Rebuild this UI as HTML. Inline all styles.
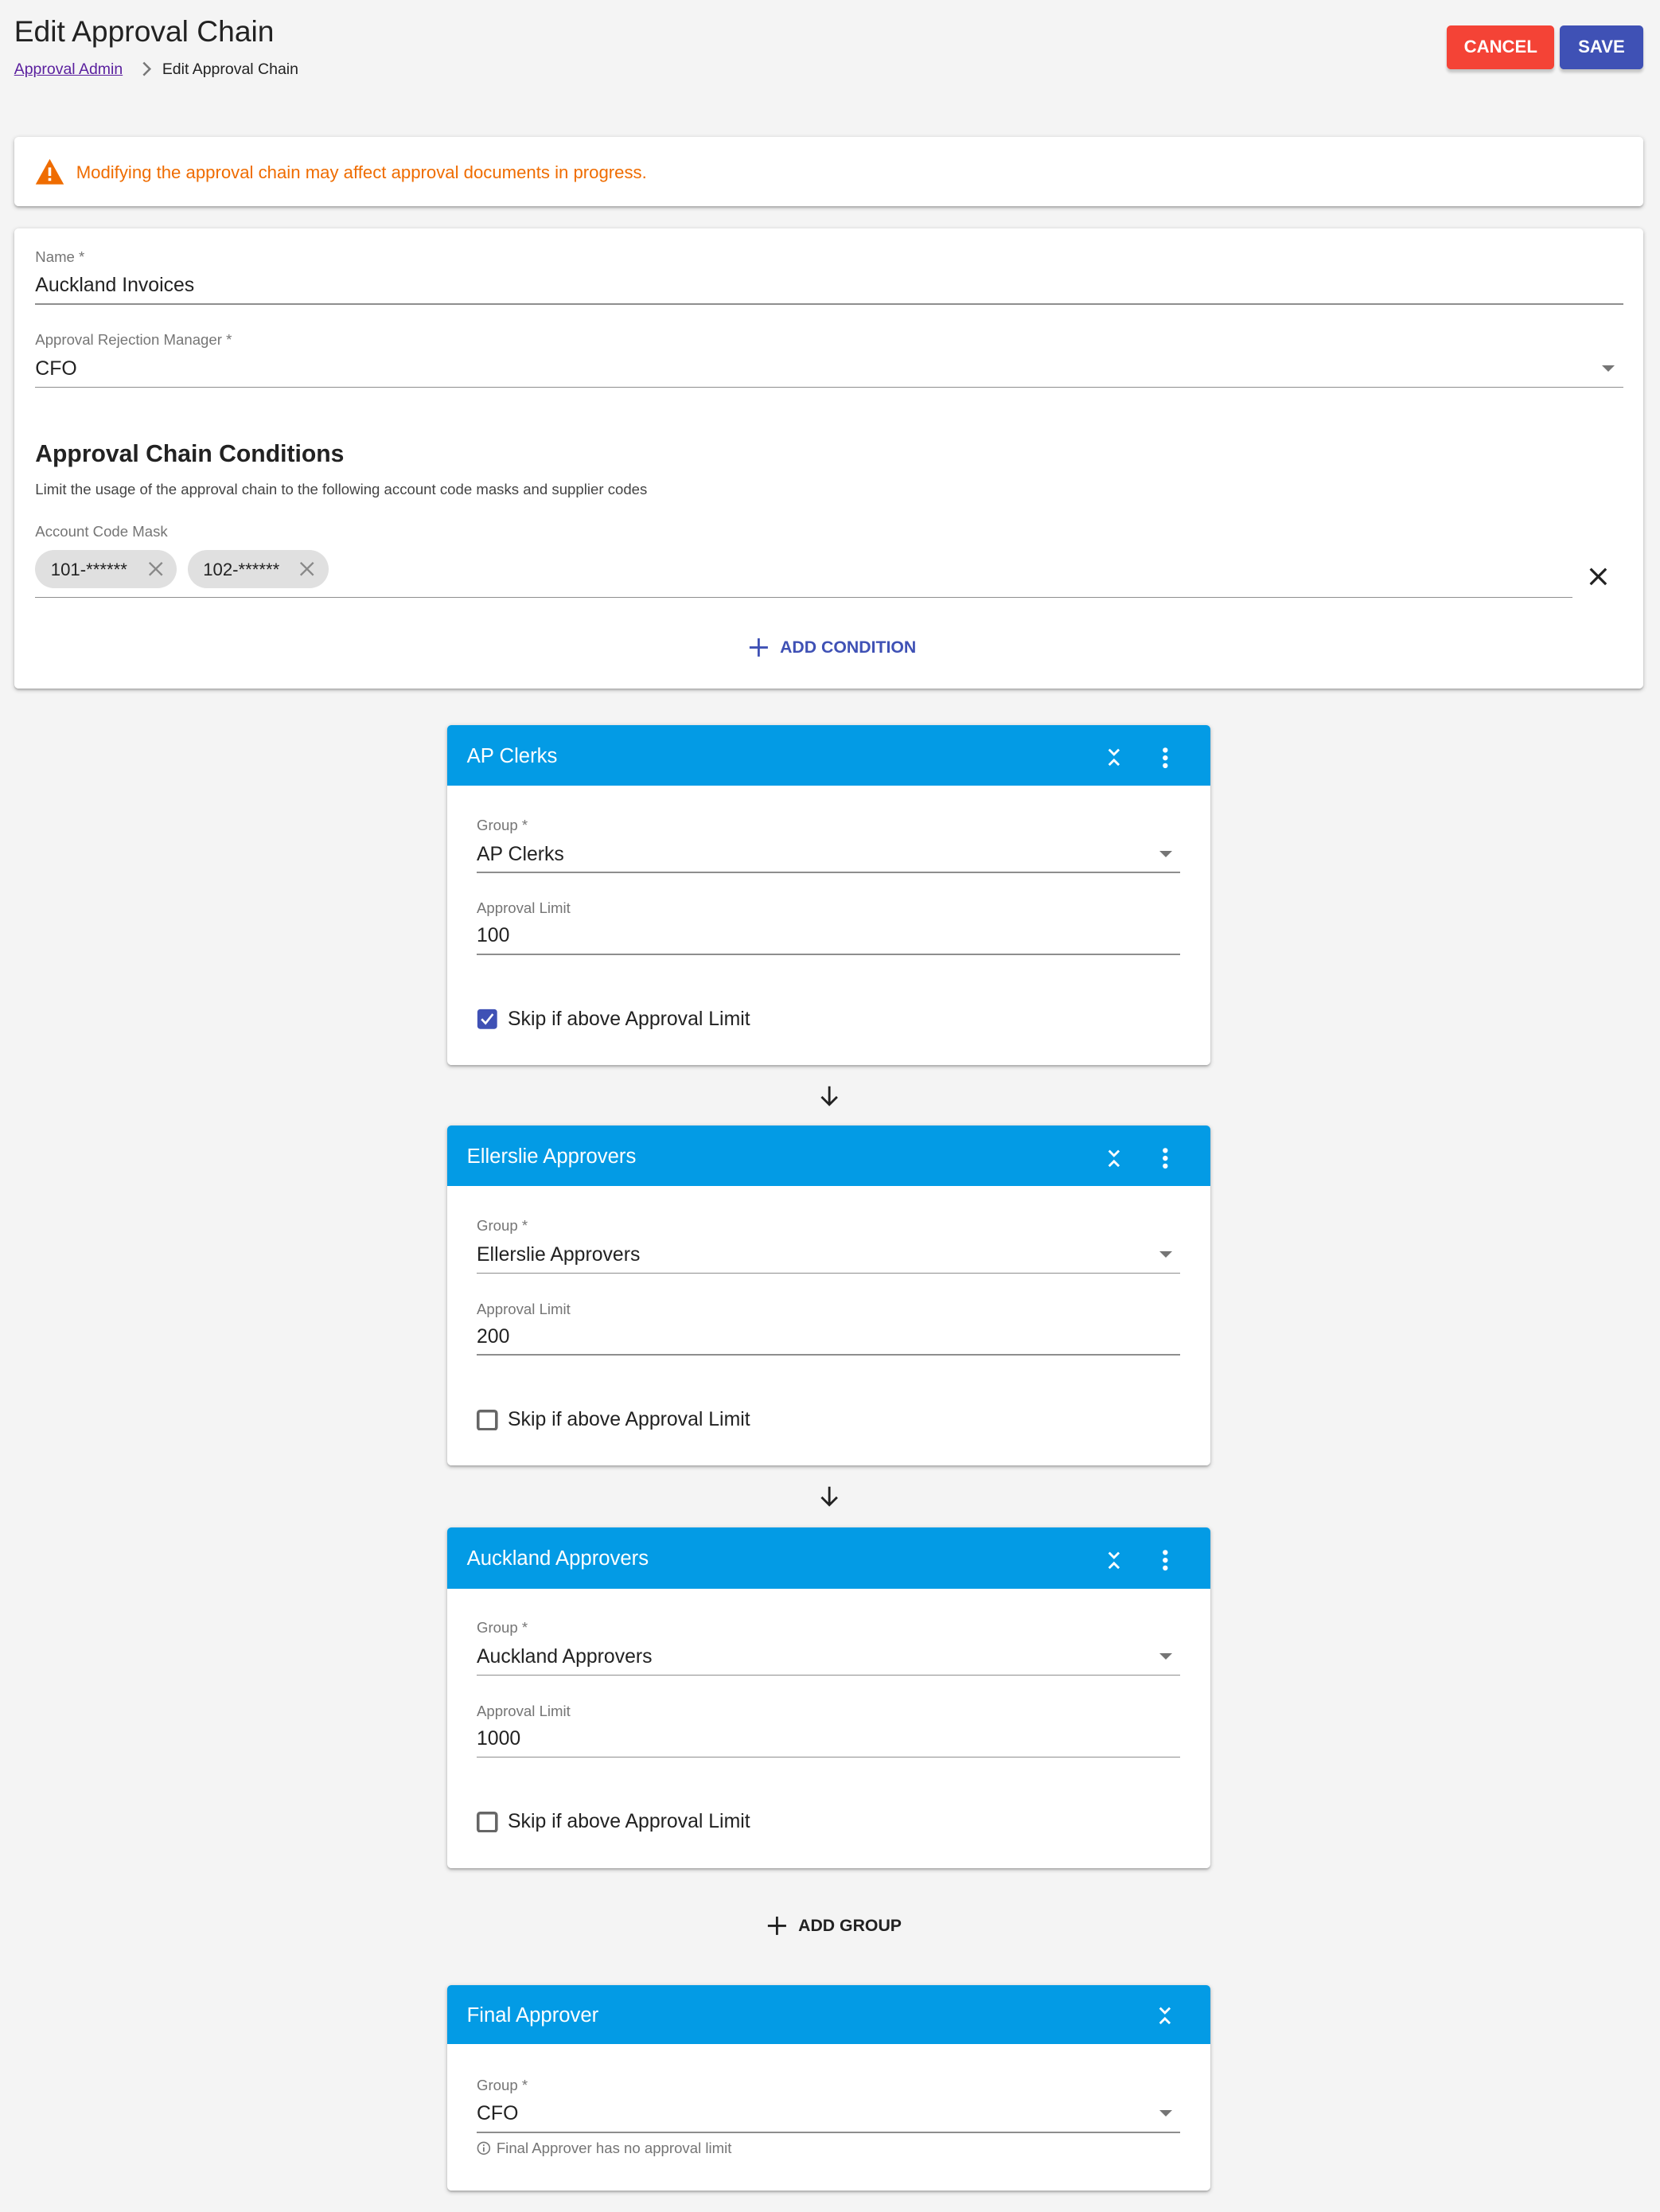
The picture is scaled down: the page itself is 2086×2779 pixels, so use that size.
<!DOCTYPE html>
<html><head><meta charset="utf-8">
<style>
html,body{margin:0;padding:0;}
body{width:2086px;height:2778px;background:#f4f4f4;overflow:hidden;font-family:"Liberation Sans",Arial,sans-serif;}
#z{zoom:1.77230;position:relative;width:1177px;height:1568px;}
.a{position:absolute;white-space:nowrap;line-height:1;}
.card{position:absolute;background:#fff;border-radius:3px;box-shadow:0 1px 3px rgba(0,0,0,.25),0 1px 1px rgba(0,0,0,.12);}
.lbl{font-size:10.5px;color:#757575;}
.val{font-size:14px;color:#222;}
.line{position:absolute;height:1px;background:#8e8e8e;}
.hdr{position:absolute;left:0;top:0;right:0;height:43px;background:#039be5;border-radius:3px 3px 0 0;}
.ht{position:absolute;left:14px;top:15px;font-size:14.5px;color:#fff;line-height:1;white-space:nowrap;}
.tri{position:absolute;width:0;height:0;border-left:5px solid transparent;border-right:5px solid transparent;border-top:5px solid #757575;}
</style></head><body><div id="z">

<div class="a" style="left:10px;top:12px;font-size:21px;color:#222;">Edit Approval Chain</div>
<div class="a" style="left:10px;top:44px;font-size:11px;color:#5a1f9e;text-decoration:underline;">Approval Admin</div>
<svg class="a" style="left:99px;top:43px" width="10" height="12" viewBox="0 0 10 12"><path d="M3 1.5 L7.5 6 L3 10.5" stroke="#777" stroke-width="1.4" fill="none"/></svg>
<div class="a" style="left:115px;top:44px;font-size:11px;color:#222;">Edit Approval Chain</div>

<div class="a" style="left:1026px;top:18px;width:76px;height:31px;background:#f44336;border-radius:3px;box-shadow:0 2px 2px rgba(0,0,0,.2);color:#fff;font-size:12.5px;font-weight:bold;text-align:center;line-height:31px;">CANCEL</div>
<div class="a" style="left:1106px;top:18px;width:59px;height:31px;background:#3f51b5;border-radius:3px;box-shadow:0 2px 2px rgba(0,0,0,.2);color:#fff;font-size:12.5px;font-weight:bold;text-align:center;line-height:31px;">SAVE</div>

<div class="card" style="left:10px;top:97px;width:1155px;height:49px;">
 <svg class="a" style="left:14px;top:15px" width="22" height="20" viewBox="0 0 22 20"><path d="M11 1 L21 19 L1 19 Z" fill="#ef6c00"/><rect x="10" y="7" width="2" height="6" fill="#fff"/><rect x="10" y="14.5" width="2" height="2" fill="#fff"/></svg>
 <div class="a" style="left:44px;top:19px;font-size:12.5px;color:#ef6c00;">Modifying the approval chain may affect approval documents in progress.</div>
</div>

<div class="card" style="left:10px;top:162px;width:1155px;height:326px;">
 <div class="a lbl" style="left:15px;top:15px;">Name *</div>
 <div class="a val" style="left:15px;top:34px;">Auckland Invoices</div>
 <div class="line" style="left:15px;top:53px;width:1126px;"></div>
 <div class="a lbl" style="left:15px;top:74px;">Approval Rejection Manager *</div>
 <div class="a val" style="left:15px;top:93px;">CFO</div>
 <div class="tri" style="left:1126px;top:97px;"></div>
 <div class="line" style="left:15px;top:112px;width:1126px;"></div>
 <div class="a" style="left:15px;top:152px;font-size:17px;color:#222;font-weight:bold;">Approval Chain Conditions</div>
 <div class="a" style="left:15px;top:180px;font-size:10.5px;color:#444;">Limit the usage of the approval chain to the following account code masks and supplier codes</div>
 <div class="a lbl" style="left:15px;top:210px;">Account Code Mask</div>
 <div class="a" style="left:15px;top:228px;width:100px;height:27px;border-radius:14px;background:#e0e0e0;"></div>
 <div class="a" style="left:26px;top:236px;font-size:12.5px;color:#222;">101-******</div>
 <svg class="a" style="left:95px;top:236px" width="11" height="11" viewBox="0 0 11 11"><path d="M1 1L10 10M10 1L1 10" stroke="#888" stroke-width="1.3"/></svg>
 <div class="a" style="left:123px;top:228px;width:100px;height:27px;border-radius:14px;background:#e0e0e0;"></div>
 <div class="a" style="left:134px;top:236px;font-size:12.5px;color:#222;">102-******</div>
 <svg class="a" style="left:202px;top:236px" width="11" height="11" viewBox="0 0 11 11"><path d="M1 1L10 10M10 1L1 10" stroke="#888" stroke-width="1.3"/></svg>
 <div class="line" style="left:15px;top:261px;width:1090px;"></div>
 <svg class="a" style="left:1116px;top:240px" width="14" height="14" viewBox="0 0 14 14"><path d="M1.5 1.5L12.5 12.5M12.5 1.5L1.5 12.5" stroke="#222" stroke-width="1.8"/></svg>
 <svg class="a" style="left:521px;top:290px" width="14" height="14" viewBox="0 0 14 14"><path d="M7 0.5V13.5M0.5 7H13.5" stroke="#3f51b5" stroke-width="1.6"/></svg>
 <div class="a" style="left:543px;top:291px;font-size:12px;font-weight:bold;color:#3f51b5;">ADD CONDITION</div>
</div>

<!-- card 1 -->
<div class="card" style="left:317px;top:514px;width:541px;height:241px;">
 <div class="hdr"></div><div class="ht">AP Clerks</div>
 <svg class="a" style="left:468px;top:16px" width="10" height="14" viewBox="0 0 10 14"><path d="M1.5 1.5L5 5L8.5 1.5M1.5 12.5L5 9L8.5 12.5" stroke="#fff" stroke-width="1.6" fill="none"/></svg>
 <svg class="a" style="left:506px;top:15px" width="6" height="16" viewBox="0 0 6 16"><circle cx="3" cy="2.5" r="1.8" fill="#fff"/><circle cx="3" cy="8" r="1.8" fill="#fff"/><circle cx="3" cy="13.5" r="1.8" fill="#fff"/></svg>
 <div class="a lbl" style="left:21px;top:66px;">Group *</div>
 <div class="a val" style="left:21px;top:85px;">AP Clerks</div>
 <div class="tri" style="left:505px;top:89px;"></div>
 <div class="line" style="left:21px;top:104px;width:499px;"></div>
 <div class="a lbl" style="left:21px;top:125px;">Approval Limit</div>
 <div class="a val" style="left:21px;top:143px;">100</div>
 <div class="line" style="left:21px;top:162px;width:499px;"></div>
 <svg class="a" style="left:21px;top:201px" width="15" height="15" viewBox="0 0 15 15"><rect x="0.5" y="0.5" width="14" height="14" rx="2" fill="#3f51b5"/><path d="M3.5 7.5L6.3 10.5L11.5 4" stroke="#fff" stroke-width="1.5" fill="none"/></svg>
 <div class="a val" style="left:43px;top:202px;">Skip if above Approval Limit</div>
</div>
<svg class="a" style="left:580px;top:769px" width="16" height="16" viewBox="0 0 16 16"><path d="M8 1V14M2.5 8.5L8 14L13.5 8.5" stroke="#222" stroke-width="1.6" fill="none"/></svg>

<!-- card 2 -->
<div class="card" style="left:317px;top:798px;width:541px;height:241px;">
 <div class="hdr"></div><div class="ht">Ellerslie Approvers</div>
 <svg class="a" style="left:468px;top:16px" width="10" height="14" viewBox="0 0 10 14"><path d="M1.5 1.5L5 5L8.5 1.5M1.5 12.5L5 9L8.5 12.5" stroke="#fff" stroke-width="1.6" fill="none"/></svg>
 <svg class="a" style="left:506px;top:15px" width="6" height="16" viewBox="0 0 6 16"><circle cx="3" cy="2.5" r="1.8" fill="#fff"/><circle cx="3" cy="8" r="1.8" fill="#fff"/><circle cx="3" cy="13.5" r="1.8" fill="#fff"/></svg>
 <div class="a lbl" style="left:21px;top:66px;">Group *</div>
 <div class="a val" style="left:21px;top:85px;">Ellerslie Approvers</div>
 <div class="tri" style="left:505px;top:89px;"></div>
 <div class="line" style="left:21px;top:104px;width:499px;"></div>
 <div class="a lbl" style="left:21px;top:125px;">Approval Limit</div>
 <div class="a val" style="left:21px;top:143px;">200</div>
 <div class="line" style="left:21px;top:162px;width:499px;"></div>
 <svg class="a" style="left:21px;top:201px" width="15" height="15" viewBox="0 0 15 15"><rect x="1" y="1" width="13" height="13" rx="1.5" fill="none" stroke="#666" stroke-width="2"/></svg>
 <div class="a val" style="left:43px;top:202px;">Skip if above Approval Limit</div>
</div>
<svg class="a" style="left:580px;top:1053px" width="16" height="16" viewBox="0 0 16 16"><path d="M8 1V14M2.5 8.5L8 14L13.5 8.5" stroke="#222" stroke-width="1.6" fill="none"/></svg>

<!-- card 3 -->
<div class="card" style="left:317px;top:1083px;width:541px;height:241px;">
 <div class="hdr"></div><div class="ht">Auckland Approvers</div>
 <svg class="a" style="left:468px;top:16px" width="10" height="14" viewBox="0 0 10 14"><path d="M1.5 1.5L5 5L8.5 1.5M1.5 12.5L5 9L8.5 12.5" stroke="#fff" stroke-width="1.6" fill="none"/></svg>
 <svg class="a" style="left:506px;top:15px" width="6" height="16" viewBox="0 0 6 16"><circle cx="3" cy="2.5" r="1.8" fill="#fff"/><circle cx="3" cy="8" r="1.8" fill="#fff"/><circle cx="3" cy="13.5" r="1.8" fill="#fff"/></svg>
 <div class="a lbl" style="left:21px;top:66px;">Group *</div>
 <div class="a val" style="left:21px;top:85px;">Auckland Approvers</div>
 <div class="tri" style="left:505px;top:89px;"></div>
 <div class="line" style="left:21px;top:104px;width:499px;"></div>
 <div class="a lbl" style="left:21px;top:125px;">Approval Limit</div>
 <div class="a val" style="left:21px;top:143px;">1000</div>
 <div class="line" style="left:21px;top:162px;width:499px;"></div>
 <svg class="a" style="left:21px;top:201px" width="15" height="15" viewBox="0 0 15 15"><rect x="1" y="1" width="13" height="13" rx="1.5" fill="none" stroke="#666" stroke-width="2"/></svg>
 <div class="a val" style="left:43px;top:202px;">Skip if above Approval Limit</div>
</div>

<svg class="a" style="left:544px;top:1358px" width="14" height="14" viewBox="0 0 14 14"><path d="M7 0.5V13.5M0.5 7H13.5" stroke="#222" stroke-width="1.6"/></svg>
<div class="a" style="left:566px;top:1359px;font-size:12px;font-weight:bold;color:#222;">ADD GROUP</div>

<!-- final -->
<div class="card" style="left:317px;top:1407px;width:541px;height:146px;">
 <div class="hdr" style="height:42px;"></div><div class="ht">Final Approver</div>
 <svg class="a" style="left:504px;top:15px" width="10" height="14" viewBox="0 0 10 14"><path d="M1.5 1.5L5 5L8.5 1.5M1.5 12.5L5 9L8.5 12.5" stroke="#fff" stroke-width="1.6" fill="none"/></svg>
 <div class="a lbl" style="left:21px;top:66px;">Group *</div>
 <div class="a val" style="left:21px;top:85px;">CFO</div>
 <div class="tri" style="left:505px;top:89px;"></div>
 <div class="line" style="left:21px;top:104px;width:499px;"></div>
 <svg class="a" style="left:21px;top:111px" width="10" height="10" viewBox="0 0 10 10"><circle cx="5" cy="5" r="4.2" fill="none" stroke="#777" stroke-width="0.9"/><rect x="4.5" y="4.3" width="1" height="3.2" fill="#777"/><rect x="4.5" y="2.4" width="1" height="1" fill="#777"/></svg>
 <div class="a" style="left:35px;top:111px;font-size:10.5px;color:#757575;">Final Approver has no approval limit</div>
</div>

</div></body></html>
